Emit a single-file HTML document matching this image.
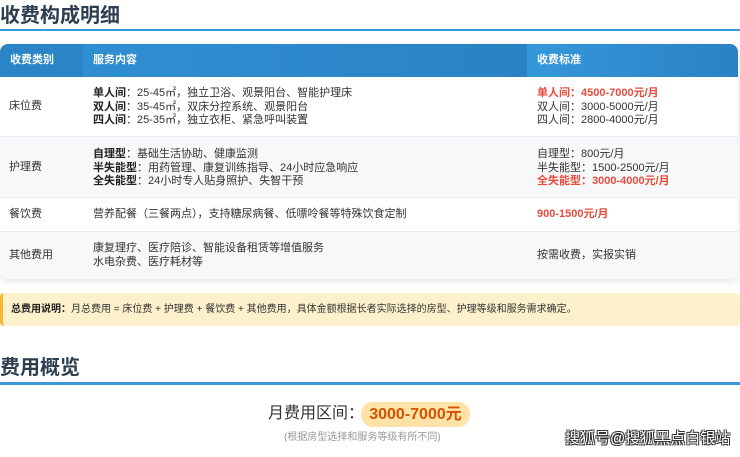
<!DOCTYPE html>
<html><head><meta charset="utf-8"><style>
*{margin:0;padding:0;box-sizing:border-box}
body{width:740px;height:457px;overflow:hidden;background:#fff;font-family:"Liberation Sans","Noto Sans CJK SC",sans-serif;color:#333;position:relative}
.a{position:absolute}
h2{position:absolute;left:0;font-size:20px;font-weight:bold;color:#2c3e50;letter-spacing:0px}
.line{position:absolute;left:0;width:740px;height:2px;background:#3a9ad9}
.tbl{position:absolute;left:0;top:44px;width:738px;height:235px;border-radius:8px;overflow:hidden;box-shadow:0 2px 8px rgba(0,0,0,.12)}
.hd{position:absolute;top:0;height:33px;background:linear-gradient(90deg,#2f8fd3,#2a82c2);color:#fff;font-size:11px;font-weight:bold;line-height:33px;padding-left:10px}
.row{position:absolute;left:0;width:738px;border-bottom:1px solid #e8ecef;font-size:11px;line-height:13.5px}
.row div{position:absolute}
.r{color:#e74c3c;font-weight:bold}
b{font-weight:bold;color:#222}
</style></head><body>
<h2 style="top:-1px">收费构成明细</h2>
<div class="line" style="top:29px"></div>
<div class="tbl">
<div class="hd" style="left:0;width:83px;background:#2a84c6">收费类别</div>
<div class="hd" style="left:83px;width:444px;padding-left:10px">服务内容</div>
<div class="hd" style="left:527px;width:211px;background:linear-gradient(90deg,#3597db,#2a82c2)">收费标准</div>
<div class="row" style="top:33px;height:60px;background:#fff">
<div style="left:9px;top:23px">床位费</div>
<div style="left:93px;top:10px"><b>单人间</b>：25-45㎡，独立卫浴、观景阳台、智能护理床<br><b>双人间</b>：35-45㎡，双床分控系统、观景阳台<br><b>四人间</b>：25-35㎡，独立衣柜、紧急呼叫装置</div>
<div style="left:537px;top:10px"><span class="r">单人间：4500-7000元/月</span><br>双人间：3000-5000元/月<br>四人间：2800-4000元/月</div>
</div>
<div class="row" style="top:93px;height:61px;background:#f6f8fa">
<div style="left:9px;top:24px">护理费</div>
<div style="left:93px;top:11px"><b>自理型</b>：基础生活协助、健康监测<br><b>半失能型</b>：用药管理、康复训练指导、24小时应急响应<br><b>全失能型</b>：24小时专人贴身照护、失智干预</div>
<div style="left:537px;top:11px">自理型：800元/月<br>半失能型：1500-2500元/月<br><span class="r">全失能型：3000-4000元/月</span></div>
</div>
<div class="row" style="top:154px;height:34px;background:#fff">
<div style="left:9px;top:10px">餐饮费</div>
<div style="left:93px;top:10px">营养配餐（三餐两点），支持糖尿病餐、低嘌呤餐等特殊饮食定制</div>
<div style="left:537px;top:10px" class="r">900-1500元/月</div>
</div>
<div class="row" style="top:188px;height:47px;background:#f6f8fa;border-bottom:none">
<div style="left:9px;top:17px">其他费用</div>
<div style="left:93px;top:10px">康复理疗、医疗陪诊、智能设备租赁等增值服务<br>水电杂费、医疗耗材等</div>
<div style="left:537px;top:17px">按需收费，实报实销</div>
</div>
</div>
<div class="a" style="left:0;top:293px;width:740px;height:33px;background:#fdf1cc;border-left:3px solid #f5b82e;border-radius:4px;font-size:10px;line-height:33px;padding-left:8px;color:#333"><b>总费用说明：</b>月总费用 = 床位费 + 护理费 + 餐饮费 + 其他费用，具体金额根据长者实际选择的房型、护理等级和服务需求确定。</div>
<h2 style="top:351px">费用概览</h2>
<div class="line" style="top:382px;height:3px"></div>
<div class="a" style="left:268px;top:404px;font-size:16px;color:#333;line-height:20px">月费用区间：</div>
<div class="a" style="left:361px;top:402px;width:109px;height:25px;border-radius:12px;background:#fde3a8;color:#d35400;font-weight:bold;font-size:16px;line-height:25px;text-align:center">3000-7000元</div>
<div class="a" style="left:284px;top:431px;font-size:10px;color:#999;line-height:14px">(根据房型选择和服务等级有所不同)</div>
<div class="a" style="left:565px;top:430px;font-size:15px;color:#fff;line-height:18px;text-shadow:-1px -1px 0 #333,1px -1px 0 #333,-1px 1px 0 #333,1px 1px 0 #333">搜狐号@搜狐黑点白银站</div>
</body></html>
